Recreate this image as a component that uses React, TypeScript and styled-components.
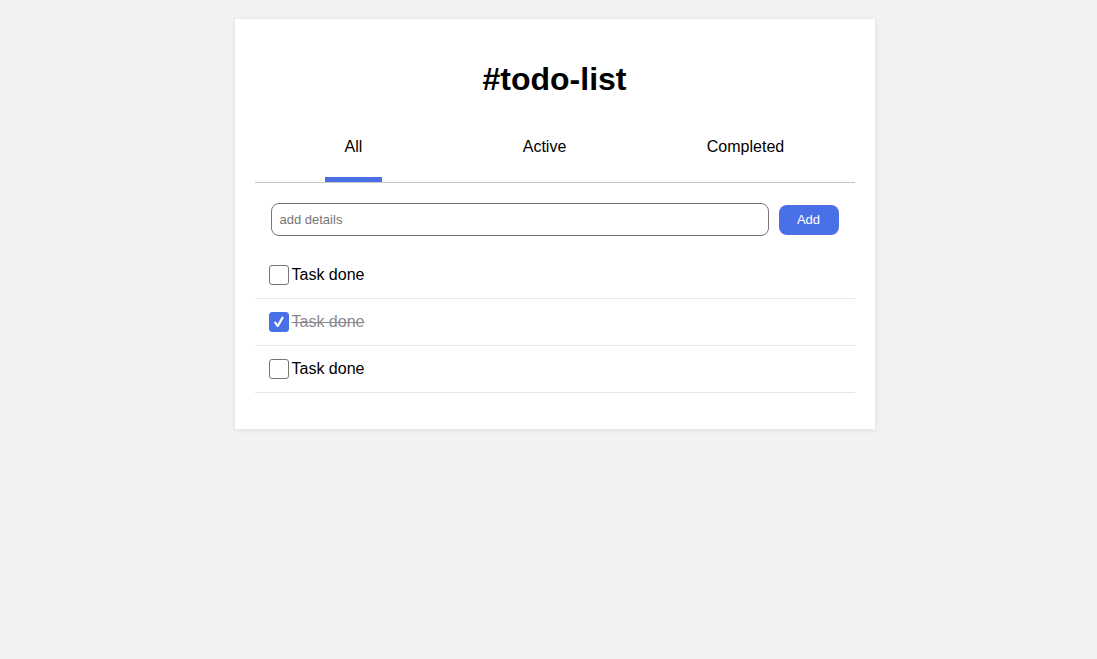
import React, { useState } from "react";
import styled, { createGlobalStyle } from "styled-components";

const GlobalStyle = createGlobalStyle`
  html, body {
    margin: 0;
    padding: 0;
    background: #f2f2f2;
    font-family: "Liberation Sans", Arial, Helvetica, sans-serif;
    color: #000;
  }
  * { box-sizing: border-box; }
`;

const Page = styled.div`
  min-height: 659px;
  padding: 19px 0 0 12px;
`;

const Card = styled.main`
  width: 640px;
  margin: 0 auto;
  background: #fff;
  padding: 20px 20px 0;
  box-shadow: 0 1px 6px rgba(0, 0, 0, 0.09);
`;

const Title = styled.h1`
  margin: 0;
  padding: 22px 0 21px;
  font-size: 32px;
  line-height: 37px;
  font-weight: 700;
  text-align: center;
`;

const Nav = styled.nav`
  display: grid;
  grid-template-columns: 198px 184px 218px;
  border-bottom: 1px solid #c6c6c6;
`;

const Tab = styled.button`
  display: flex;
  justify-content: center;
  align-items: flex-end;
  padding: 19px 0 0;
  border: none;
  background: none;
  font: inherit;
  cursor: pointer;
`;

const TabLabel = styled.span<{ $active: boolean }>`
  display: block;
  padding: 0 20px 21px;
  font-size: 16px;
  line-height: 18px;
  color: #000;
  border-bottom: 5px solid ${(p) => (p.$active ? "#4a70e8" : "transparent")};
`;

const Form = styled.form`
  display: flex;
  align-items: center;
  gap: 10px;
  padding: 20px 16px 16px;
`;

const Input = styled.input`
  flex: 1;
  height: 33px;
  border: 1px solid #767676;
  border-radius: 8px;
  padding: 0 8px;
  font-family: "Liberation Sans", Arial, sans-serif;
  font-size: 13px;
  outline: none;
  &::placeholder {
    color: #757575;
  }
`;

const AddButton = styled.button`
  width: 60px;
  height: 30px;
  border: none;
  border-radius: 8px;
  background: #4a70e8;
  color: #fff;
  font-family: "Liberation Sans", Arial, sans-serif;
  font-size: 13px;
  cursor: pointer;
`;

const List = styled.ul`
  list-style: none;
  margin: 0;
  padding: 0 0 36px;
`;

const Row = styled.li`
  display: flex;
  align-items: center;
  gap: 3px;
  height: 47px;
  padding: 0 0 1px 14px;
  border-bottom: 1px solid #e6e6e6;
`;

const Box = styled.span<{ $checked: boolean }>`
  display: flex;
  align-items: center;
  justify-content: center;
  width: 20px;
  height: 20px;
  border-radius: 3px;
  border: 1px solid ${(p) => (p.$checked ? "#4a70e8" : "#767676")};
  background: ${(p) => (p.$checked ? "#4a70e8" : "#fff")};
  cursor: pointer;
`;

const Label = styled.span<{ $done: boolean }>`
  font-size: 16px;
  line-height: 18px;
  color: ${(p) => (p.$done ? "#8a8a8a" : "#000")};
  text-decoration: ${(p) => (p.$done ? "line-through" : "none")};
`;

const Check = () => (
  <svg width="14" height="14" viewBox="0 0 14 14" fill="none">
    <path
      d="M3.2 7.6 L5.8 11 L10.6 2.6"
      stroke="#fff"
      strokeWidth="2.2"
      strokeLinecap="round"
      strokeLinejoin="round"
    />
  </svg>
);

const tabs = ["All", "Active", "Completed"];

export default function App() {
  const [active, setActive] = useState("All");
  const [items, setItems] = useState([
    { id: 1, text: "Task done", done: false },
    { id: 2, text: "Task done", done: true },
    { id: 3, text: "Task done", done: false },
  ]);

  return (
    <Page>
      <GlobalStyle />
      <Card>
        <Title>#todo-list</Title>
        <Nav>
          {tabs.map((t) => (
            <Tab key={t} type="button" onClick={() => setActive(t)}>
              <TabLabel $active={active === t}>{t}</TabLabel>
            </Tab>
          ))}
        </Nav>
        <Form onSubmit={(e) => e.preventDefault()}>
          <Input placeholder="add details" />
          <AddButton type="submit">Add</AddButton>
        </Form>
        <List>
          {items.map((it) => (
            <Row key={it.id}>
              <Box
                $checked={it.done}
                onClick={() =>
                  setItems((xs) =>
                    xs.map((x) => (x.id === it.id ? { ...x, done: !x.done } : x))
                  )
                }
              >
                {it.done && <Check />}
              </Box>
              <Label $done={it.done}>{it.text}</Label>
            </Row>
          ))}
        </List>
      </Card>
    </Page>
  );
}
